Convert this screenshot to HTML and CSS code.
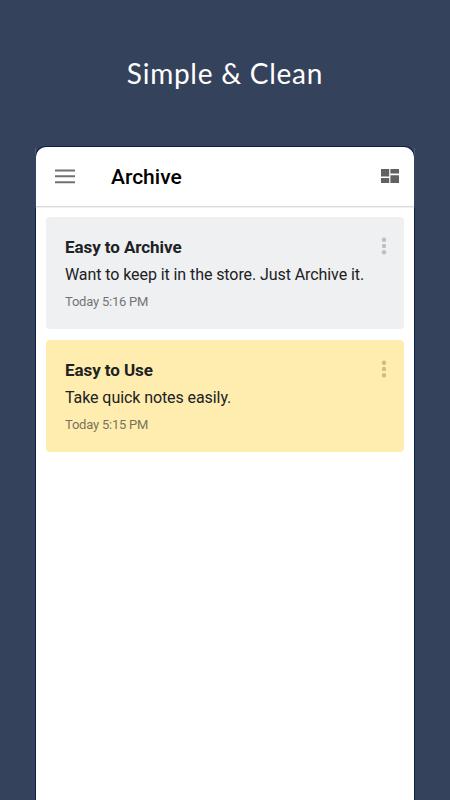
FILE: index.html
```html
<!DOCTYPE html>
<html lang="en">

<head>
    <meta charset="UTF-8">
    <meta name="viewport" content="width=device-width, initial-scale=1.0">
    <title>Archive</title>
    <link rel="stylesheet" href="styles.css">
</head>

<body>
    <h1>Simple &amp; Clean</h1>
    <main class="phone">
        <header class="toolbar">
            <svg class="menu" width="20" height="15" viewBox="0 0 20 15">
                <path d="M0 1.5h20M0 7.3h20M0 13.2h20" stroke="#717171" stroke-width="2" />
            </svg>
            <h2>Archive</h2>
            <svg class="grid" width="18" height="14" viewBox="0 0 18 14" fill="#616161">
                <path d="M0 0h8.2v7.4H0zM9.4 0H18v4.5H9.4zM0 9h8.2v5H0zM9.4 6.3H18V14H9.4z" />
            </svg>
        </header>
        <section class="notes">
            <article class="note gray">
                <div class="text">
                    <h3>Easy to Archive</h3>
                    <p class="desc">Want to keep it in the store. Just Archive it.</p>
                    <p class="time">Today 5:16 PM</p>
                </div>
                <svg class="dots" width="6" height="18" viewBox="0 0 6 18">
                    <circle cx="3" cy="2.7" r="2.2" />
                    <circle cx="3" cy="9" r="2.2" />
                    <circle cx="3" cy="15.3" r="2.2" />
                </svg>
            </article>
            <article class="note yellow">
                <div class="text">
                    <h3>Easy to Use</h3>
                    <p class="desc">Take quick notes easily.</p>
                    <p class="time">Today 5:15 PM</p>
                </div>
                <svg class="dots" width="6" height="18" viewBox="0 0 6 18">
                    <circle cx="3" cy="2.7" r="2.2" />
                    <circle cx="3" cy="9" r="2.2" />
                    <circle cx="3" cy="15.3" r="2.2" />
                </svg>
            </article>
        </section>
    </main>
</body>

</html>
```
FILE: styles.css
```css
* {
    margin: 0;
    padding: 0;
    box-sizing: border-box;
}

body {
    height: 800px;
    overflow: hidden;
    display: flex;
    flex-direction: column;
    align-items: center;
    background-color: #35425b;
    font-family: Roboto, sans-serif;
}

h1 {
    height: 147px;
    flex-shrink: 0;
    line-height: 146px;
    color: white;
    font-family: Lato, sans-serif;
    font-size: 28px;
    font-weight: 400;
    letter-spacing: 0.75px;
    white-space: nowrap;
}

.phone {
    width: 378px;
    flex: 1;
    background-color: white;
    border-radius: 10px 10px 0 0;
    box-shadow: 0 0 0 1px #0b1f4b;
}

.toolbar {
    height: 60px;
    display: flex;
    align-items: center;
    padding: 0 15px 0 19px;
    border-bottom: 1px solid #dcdcdc;
    box-shadow: 0 1px 1px #f0f0f0;
}

.toolbar h2 {
    flex: 1;
    margin-left: 36px;
    padding-top: 1px;
    font-size: 21px;
    font-weight: 500;
    line-height: 26px;
}

.grid {
    margin-bottom: 2px;
}

.notes {
    display: flex;
    flex-direction: column;
    gap: 10.5px;
    padding: 10px;
}

.note {
    height: 112px;
    display: flex;
    justify-content: space-between;
    padding: 20px 17px 0 19px;
    border-radius: 4px;
}

.gray {
    background-color: #eff0f2;
}

.yellow {
    background-color: #ffedb0;
}

.note h3 {
    font-size: 17px;
    font-weight: 700;
    line-height: 22px;
    letter-spacing: -0.07px;
    margin-top: -1px;
    color: #202123;
}

.desc {
    margin-top: 6px;
    font-size: 16px;
    line-height: 22px;
    letter-spacing: -0.08px;
    color: #202123;
    white-space: nowrap;
}

.time {
    margin-top: 7px;
    font-size: 13px;
    line-height: 18px;
    letter-spacing: -0.22px;
    color: #202123;
    opacity: 0.6;
}

.dots {
    opacity: 0.2;
}
```
